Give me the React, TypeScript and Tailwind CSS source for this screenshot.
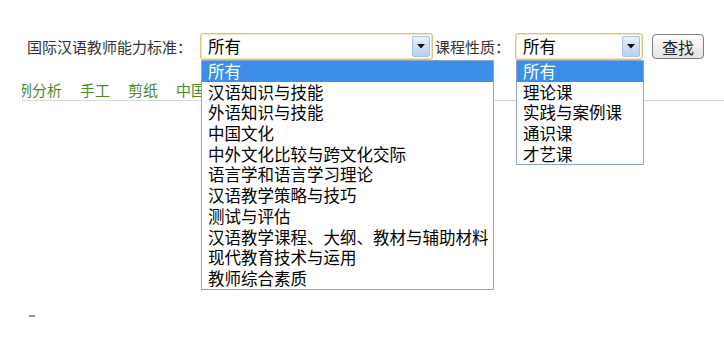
import React from "react";

const standards = [
  "所有",
  "汉语知识与技能",
  "外语知识与技能",
  "中国文化",
  "中外文化比较与跨文化交际",
  "语言学和语言学习理论",
  "汉语教学策略与技巧",
  "测试与评估",
  "汉语教学课程、大纲、教材与辅助材料",
  "现代教育技术与运用",
  "教师综合素质",
];

const courseTypes = ["所有", "理论课", "实践与案例课", "通识课", "才艺课"];

const Arrow = () => (
  <div className="flex h-[21px] w-[18px] items-center justify-center rounded-[2px] border border-[#a9c1e0] bg-gradient-to-b from-[#e6f0fc] to-[#b7d0ef]">
    <svg width="8" height="5" viewBox="0 0 8 5">
      <path d="M0 0h8L4 4.5z" fill="#111" />
    </svg>
  </div>
);

const Select = ({
  width,
  listWidth,
  options,
}: {
  width: string;
  listWidth: string;
  options: string[];
}) => (
  <div className={`relative ${width}`}>
    {/* Field */}
    <div className="flex h-[27px] items-center justify-between rounded-[3px] border border-[#e2c27e] bg-white pl-[7px] pr-[2px] shadow-[inset_0_0_0_1px_#f3e3bd]">
      <span className="text-[16.5px] leading-none text-black">所有</span>
      <Arrow />
    </div>

    {/* Open list */}
    <div
      className={`absolute left-[1px] top-[27px] z-10 border border-[#8fa7c6] bg-white ${listWidth}`}
    >
      {options.map((opt, i) => (
        <div
          key={i}
          className={`h-[20.7px] whitespace-nowrap pl-[6px] text-[16.5px] leading-[20.7px] ${
            i === 0 ? "bg-[#3c8fe8] text-white" : "text-black"
          }`}
        >
          {opt}
        </div>
      ))}
    </div>
  </div>
);

export default function App() {
  return (
    <div
      className="relative h-[337px] w-[724px] overflow-hidden bg-white"
      style={{ fontFamily: '"Noto Sans CJK SC", "Noto Sans", sans-serif' }}
    >
      {/* Filter row */}
      <div className="flex items-center pl-[27px] pt-[33px]">
        <span className="text-[15px] leading-none text-[#333]">国际汉语教师能力标准：</span>
        <div className="ml-[8px]">
          <Select width="w-[233px]" listWidth="w-[293px]" options={standards} />
        </div>
        <span className="ml-[2px] text-[15px] leading-none text-[#333]">课程性质：</span>
        <div className="ml-[5px]">
          <Select width="w-[128px]" listWidth="w-[128px]" options={courseTypes} />
        </div>
        <button className="ml-[9px] h-[25px] w-[52px] rounded-[4px] border border-[#7d7d7d] bg-gradient-to-b from-[#fdfdfd] to-[#e3e3e3] text-[16px] leading-none text-[#222]">
          查找
        </button>
      </div>

      {/* Category links */}
      <div className="ml-[22px] mt-[20px] h-[21px] overflow-hidden border-b border-[#d8d8d8]">
        <div className="-ml-[5px] flex gap-[18px] whitespace-nowrap text-[15px] leading-[20px] text-[#4c8a2c]">
          <span>例分析</span>
          <span>手工</span>
          <span>剪纸</span>
          <span>中国结</span>
        </div>
      </div>

      <div className="ml-[29px] mt-[214px] h-[2px] w-[6px] bg-[#9a9a9a]" />
    </div>
  );
}
